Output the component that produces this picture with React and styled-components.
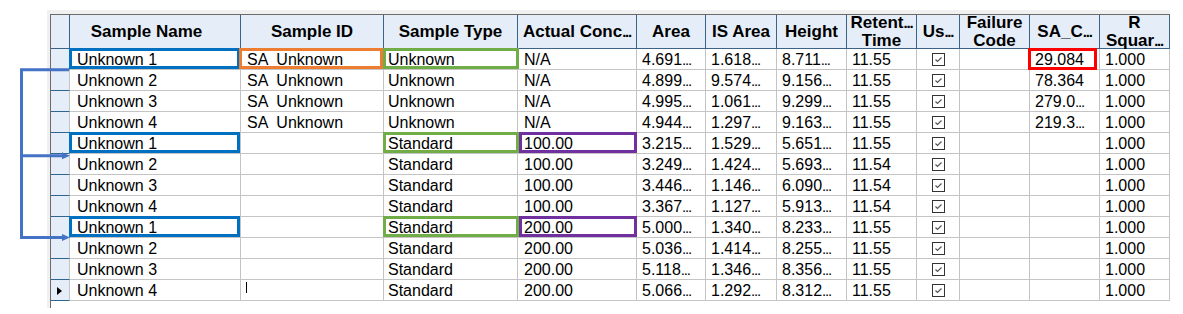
import React from "react";
import styled, { createGlobalStyle } from "styled-components";

const GlobalStyle = createGlobalStyle`
  body {
    margin: 0;
    background: #fff;
    font-family: "Liberation Sans", Arial, sans-serif;
    color: #000;
  }
`;

const columns = [
  { key: "name", title: ["Sample Name"], width: 171, pad: 7, headPad: 17 },
  { key: "id", title: ["Sample ID"], width: 143, pad: 6 },
  { key: "type", title: ["Sample Type"], width: 134, pad: 4 },
  { key: "conc", title: ["Actual Conc…"], width: 119, pad: 6 },
  { key: "area", title: ["Area"], width: 69, pad: 5 },
  { key: "isArea", title: ["IS Area"], width: 71, pad: 5 },
  { key: "height", title: ["Height"], width: 70, pad: 5 },
  { key: "rt", title: ["Retent…", "Time"], width: 70, pad: 5 },
  { key: "use", title: ["Us…"], width: 43, pad: 0, center: true },
  { key: "fail", title: ["Failure", "Code"], width: 70, pad: 5 },
  { key: "sac", title: ["SA_C…"], width: 70, pad: 5 },
  { key: "r2", title: ["R", "Squar…"], width: 70, pad: 5 },
];

const marks = {
  blue: { color: "#0070c0", inset: "-1px 0 0 -1px" },
  orange: { color: "#ed7d31", inset: "-1px 0 0 -2px" },
  green: { color: "#70ad47", inset: "-1px -2px 0 -1px" },
  purple: { color: "#7030a0", inset: "-1px -1px 0 1px" },
  red: { color: "#ff0000", inset: "-1px 2px -1px -2px" },
};

const unknown = (n, area, isArea, height, sac, m) => ({
  name: `Unknown ${n}`, id: "SA  Unknown", type: "Unknown", conc: "N/A",
  area, isArea, height, rt: "11.55", sac, r2: "1.000", marks: m || {},
});

const standard = (n, conc, area, isArea, height, rt, m) => ({
  name: `Unknown ${n}`, id: "", type: "Standard", conc,
  area, isArea, height, rt, sac: "", r2: "1.000", marks: m || {},
});

const rows = [
  unknown(1, "4.691…", "1.618…", "8.711…", "29.084", { name: "blue", id: "orange", type: "green", sac: "red" }),
  unknown(2, "4.899…", "9.574…", "9.156…", "78.364"),
  unknown(3, "4.995…", "1.061…", "9.299…", "279.0…"),
  unknown(4, "4.944…", "1.297…", "9.163…", "219.3…"),
  standard(1, "100.00", "3.215…", "1.529…", "5.651…", "11.55", { name: "blue", type: "green", conc: "purple" }),
  standard(2, "100.00", "3.249…", "1.424…", "5.693…", "11.54"),
  standard(3, "100.00", "3.446…", "1.146…", "6.090…", "11.54"),
  standard(4, "100.00", "3.367…", "1.127…", "5.913…", "11.54"),
  standard(1, "200.00", "5.000…", "1.340…", "8.233…", "11.55", { name: "blue", type: "green", conc: "purple" }),
  standard(2, "200.00", "5.036…", "1.414…", "8.255…", "11.55"),
  standard(3, "200.00", "5.118…", "1.346…", "8.356…", "11.55"),
  standard(4, "200.00", "5.066…", "1.292…", "8.312…", "11.55"),
];

const Page = styled.div`
  position: relative;
  width: 1183px;
  height: 314px;
`;

const Connectors = styled.svg`
  position: absolute;
  left: 0;
  top: 0;
`;

const Frame = styled.div`
  margin: 10px 0 0 47px;
  width: 1123px;
  padding: 4px 0 0 3px;
  box-sizing: border-box;
  background: #f0f0f0;
`;

const Grid = styled.div`
  display: grid;
  grid-template-columns: 19px ${columns.map((c) => c.width + "px").join(" ")};
  grid-auto-rows: min-content;
  align-content: start;
  height: 294px;
  box-sizing: border-box;
  background: #fff;
  border-left: 1px solid #6b6b6b;
  border-top: 1px solid #6b6b6b;
`;

const HeadCell = styled.div`
  height: 34px;
  box-sizing: border-box;
  background: #e5eef8;
  border-right: 1px solid #3c6384;
  border-bottom: 1px solid #3c6384;
  padding-right: ${(p) => p.$pad || 0}px;
  display: flex;
  flex-direction: column;
  align-items: center;
  justify-content: center;
  font-size: 17px;
  font-weight: bold;
  line-height: 18px;
  white-space: nowrap;
`;

const RowHead = styled.div`
  height: 21px;
  box-sizing: border-box;
  background: #e5eef8;
  border-right: 1px solid #c4c4c4;
  border-bottom: 1px solid #2f6690;
  display: flex;
  align-items: center;
  justify-content: center;
`;

const Marker = styled.span`
  width: 0;
  height: 0;
  margin-left: -2px;
  margin-top: 2px;
  border-left: 5px solid #000;
  border-top: 4.5px solid transparent;
  border-bottom: 4.5px solid transparent;
`;

const Cell = styled.div`
  position: relative;
  height: 21px;
  box-sizing: border-box;
  border-right: 1px solid #c4c4c4;
  border-bottom: 1px solid #c4c4c4;
  padding: ${(p) => (p.$center ? "0" : `2px 0 0 ${p.$pad}px`)};
  display: flex;
  align-items: ${(p) => (p.$center ? "center" : "flex-start")};
  justify-content: ${(p) => (p.$center ? "center" : "flex-start")};
  font-size: 16px;
  line-height: 18px;
  white-space: pre;

  ${(p) =>
    p.$mark &&
    `
    &::after {
      content: "";
      position: absolute;
      inset: ${marks[p.$mark].inset};
      border: 3px solid ${marks[p.$mark].color};
      z-index: 1;
      pointer-events: none;
    }
  `}
`;

const Dots = styled.span`
  letter-spacing: -1.2px;
  font-size: 15px;
`;

const Caret = styled.span`
  position: absolute;
  left: 5px;
  top: 2px;
  width: 1px;
  height: 11px;
  background: #000;
`;

const Text = ({ value }) => {
  if (!value || !value.endsWith("…")) return <>{value}</>;
  return (
    <>
      {value.slice(0, -1)}
      <Dots>...</Dots>
    </>
  );
};

const Check = () => (
  <svg width="13" height="13" viewBox="0 0 13 13">
    <rect x="0.5" y="0.5" width="12" height="12" fill="#fff" stroke="#333" />
    <path d="M3.5 6.5 L5.5 8.5 L9.5 4.5" fill="none" stroke="#555" strokeWidth="1.2" />
  </svg>
);

export default function App() {
  return (
    <Page>
      <GlobalStyle />
      <Connectors width="80" height="240" viewBox="0 0 80 240">
        <polyline
          points="69,59.8 21.5,59.8 21.5,227.5 64,227.5"
          fill="none"
          stroke="#4472c4"
          strokeWidth="3"
        />
        <line x1="21.5" y1="145.8" x2="64" y2="145.8" stroke="#4472c4" strokeWidth="3" />
        <polygon points="62,142.3 70,145.8 62,149.3" fill="#4472c4" />
        <polygon points="62,224 70,227.5 62,231" fill="#4472c4" />
      </Connectors>
      <Frame>
        <Grid>
          <HeadCell />
          {columns.map((c) => (
            <HeadCell key={c.key} $pad={c.headPad}>
              {c.title.map((t) => (
                <span key={t}>
                  <Text value={t} />
                </span>
              ))}
            </HeadCell>
          ))}
          {rows.map((r, i) => (
            <React.Fragment key={i}>
              <RowHead>{i === rows.length - 1 && <Marker />}</RowHead>
              {columns.map((c) => (
                <Cell key={c.key} $pad={c.pad} $center={c.center} $mark={r.marks[c.key]}>
                  {c.key === "use" ? <Check /> : <Text value={r[c.key]} />}
                  {i === rows.length - 1 && c.key === "id" && <Caret />}
                </Cell>
              ))}
            </React.Fragment>
          ))}
        </Grid>
      </Frame>
    </Page>
  );
}
